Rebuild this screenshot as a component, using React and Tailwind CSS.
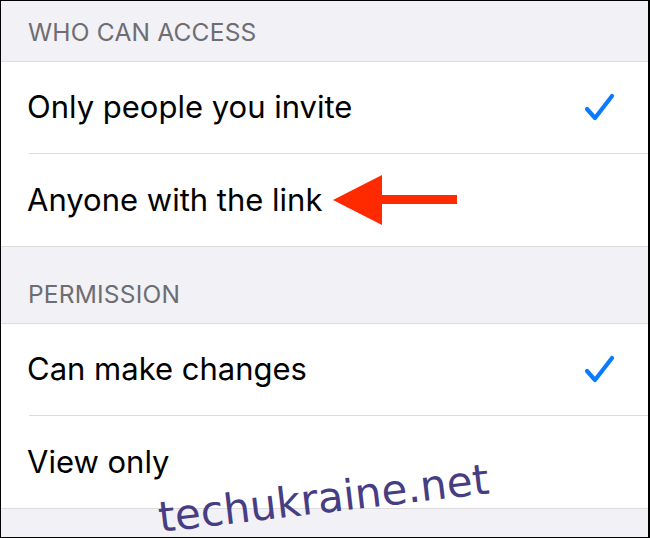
export default function App() {
  const Check = () => (
    <svg width="34" height="32" viewBox="0 0 34 32" className="mr-[31px]">
      <path d="M4 17 L12 26 L29 4" fill="none" stroke="#0a7aff" strokeWidth="4.2" strokeLinecap="round" strokeLinejoin="round" />
    </svg>
  );
  const Row = ({ text, check, last, children }) => (
    <div className="flex h-[92px] flex-col bg-white">
      <div className="flex flex-1 items-center justify-between pl-[26px] text-[31px] text-black">
        <div className="flex items-center">
          <span>{text}</span>
          {children}
        </div>
        {check && <Check />}
      </div>
      {!last && <div className="ml-[28px] h-px shrink-0 bg-[#dcdce0]" />}
    </div>
  );
  return (
    <div
      className="relative h-[538px] w-[650px] overflow-hidden border-t border-l border-b border-r-2 border-black bg-[#f1f1f6]"
      style={{ fontFamily: "Inter, 'Liberation Sans', sans-serif" }}
    >
      <div className="flex h-[60px] items-end pb-[17px] pl-[27px] text-[24.5px] leading-none tracking-[0.2px] text-[#6d6d72]">WHO CAN ACCESS</div>
      <div className="border-t border-b border-[#dcdce0]">
        <Row text="Only people you invite" check />
        <Row text="Anyone with the link" last>
          <svg width="130" height="52" viewBox="0 0 130 52" className="ml-[11px]">
            <polygon points="0,26 49,1 49,51" fill="#ff2a00" />
            <rect x="48" y="21" width="76" height="9" fill="#ff2a00" />
          </svg>
        </Row>
      </div>
      <div className="flex h-[76px] items-end pb-[17px] pl-[27px] text-[24.5px] leading-none tracking-[0.2px] text-[#6d6d72]">PERMISSION</div>
      <div className="border-t border-b border-[#dcdce0]">
        <Row text="Can make changes" check />
        <Row text="View only" last />
      </div>
      <div
        className="absolute left-[160px] top-[496px] origin-bottom-left text-[42px] leading-none text-[#473d82]"
        style={{ fontFamily: "'DejaVu Sans', sans-serif", transform: "rotate(-6.7deg)" }}
      >
        techukraine.net
      </div>
    </div>
  );
}
